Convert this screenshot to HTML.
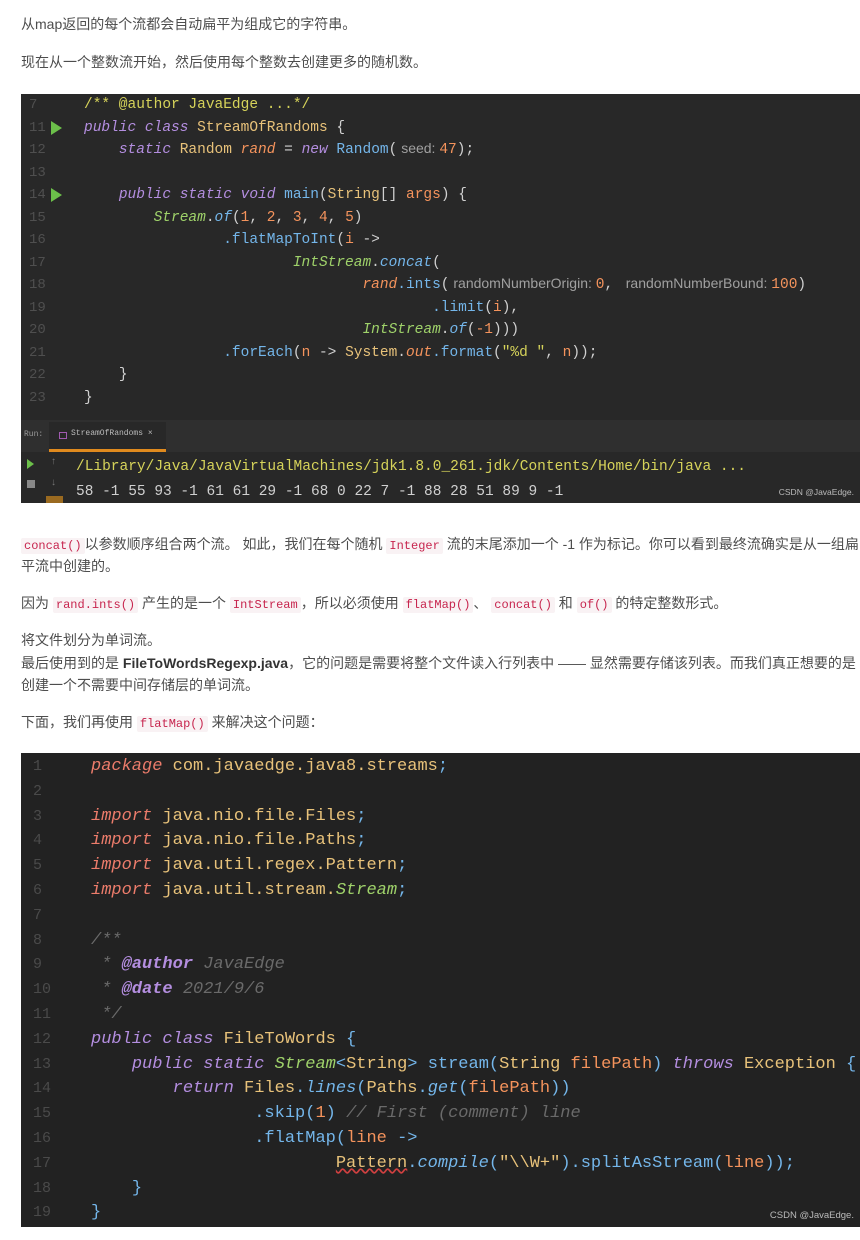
<!DOCTYPE html>
<html><head><meta charset="utf-8"><style>
*{margin:0;padding:0;box-sizing:border-box}
body{width:860px;height:1240px;background:#fff;font-family:"Liberation Sans","Noto Sans CJK SC",sans-serif;color:#4d4d4d;font-size:14px;position:relative;overflow:hidden}
.p{position:absolute;left:21px;line-height:24px;white-space:nowrap}
code{font-family:"Liberation Mono",monospace;font-size:12px;color:#c7254e;background:#f9f2f4;padding:1px 3px;border-radius:2px}
.img{position:absolute;left:21px;width:839px;background:#282828;overflow:hidden}
.l{position:absolute;white-space:pre;font-family:"Liberation Mono",monospace}
.n{position:absolute;color:#555;font-family:"Liberation Mono",monospace;white-space:pre}
.k{color:#b48ee0;font-style:italic}.y{color:#e8c27a}.b{color:#74b6ea}.o{color:#f4935c}.g{color:#9fd26a;font-style:italic}.c{color:#d6d35a}.w{color:#d0d0d0}.h{color:#a0a0a0;font-size:14px;font-family:"Liberation Sans",sans-serif;line-height:0}.r{color:#ec7c6b;font-style:italic}.gr{color:#6a6a6a;font-style:italic}.pu{color:#b48ee0;font-weight:bold;font-style:italic}
.it{font-style:italic}
</style></head><body>
<div class="p" style="top:12px">从map返回的每个流都会自动扁平为组成它的字符串。</div>
<div class="p" style="top:50px">现在从一个整数流开始，然后使用每个整数去创建更多的随机数。</div>

<div class="img" style="top:94px;height:409px">
<div class="n" style="left:8px;top:0;font-size:14px;line-height:22.5px;color:#4f4f4f">7
11
12
13
14
15
16
17
18
19
20
21
22
23</div>
<div style="position:absolute;left:30px;top:27px;width:0;height:0;border-left:11px solid #6cc04a;border-top:7px solid transparent;border-bottom:7px solid transparent"></div>
<div style="position:absolute;left:30px;top:94px;width:0;height:0;border-left:11px solid #6cc04a;border-top:7px solid transparent;border-bottom:7px solid transparent"></div>
<div class="l" style="left:63px;top:0;font-size:14.5px;line-height:22.5px"><span class="c">/** @author JavaEdge ...*/</span>
<span class="k">public class</span> <span class="y">StreamOfRandoms</span> <span class="w">{</span>
    <span class="k">static</span> <span class="y">Random</span> <span class="o it">rand</span> <span class="w">=</span> <span class="k">new</span> <span class="b">Random</span><span class="w">(</span><span class="h"> seed: </span><span class="o">47</span><span class="w">);</span>

    <span class="k">public static void</span> <span class="b">main</span><span class="w">(</span><span class="y">String</span><span class="w">[]</span> <span class="o">args</span><span class="w">) {</span>
        <span class="g">Stream</span><span class="w">.</span><span class="b it">of</span><span class="w">(</span><span class="o">1</span><span class="w">, </span><span class="o">2</span><span class="w">, </span><span class="o">3</span><span class="w">, </span><span class="o">4</span><span class="w">, </span><span class="o">5</span><span class="w">)</span>
                <span class="b">.flatMapToInt</span><span class="w">(</span><span class="o">i</span> <span class="w">-&gt;</span>
                        <span class="g">IntStream</span><span class="w">.</span><span class="b it">concat</span><span class="w">(</span>
                                <span class="o it">rand</span><span class="b">.ints</span><span class="w">(</span><span class="h"> randomNumberOrigin: </span><span class="o">0</span><span class="w">, </span><span class="h"> randomNumberBound: </span><span class="o">100</span><span class="w">)</span>
                                        <span class="b">.limit</span><span class="w">(</span><span class="o">i</span><span class="w">),</span>
                                <span class="g">IntStream</span><span class="w">.</span><span class="b it">of</span><span class="w">(</span><span class="o">-1</span><span class="w">)))</span>
                <span class="b">.forEach</span><span class="w">(</span><span class="o">n</span> <span class="w">-&gt;</span> <span class="y">System</span><span class="w">.</span><span class="o it">out</span><span class="b">.format</span><span class="w">(</span><span class="c">"%d "</span><span class="w">, </span><span class="o">n</span><span class="w">));</span>
    <span class="w">}</span>
<span class="w">}</span></div>
<div style="position:absolute;left:0;top:326px;width:839px;height:32px;background:#2f2f2f"></div>
<div style="position:absolute;left:3px;top:336px;font-size:8px;color:#999;font-family:'Liberation Mono',monospace">Run:</div>
<div style="position:absolute;left:28px;top:328px;width:117px;height:30px;background:#282828;border-bottom:3px solid #e08a1e"></div>
<div style="position:absolute;left:38px;top:338px;width:8px;height:7px;border:1px solid #a05ab0"></div>
<div style="position:absolute;left:50px;top:335px;font-size:8px;color:#bbb;font-family:'Liberation Mono',monospace">StreamOfRandoms ×</div>
<div style="position:absolute;left:6px;top:365px;width:0;height:0;border-left:7px solid #6cc04a;border-top:5px solid transparent;border-bottom:5px solid transparent"></div>
<div style="position:absolute;left:6px;top:386px;width:8px;height:8px;background:#888"></div>
<div style="position:absolute;left:30px;top:362px;font-size:10px;color:#777">↑</div>
<div style="position:absolute;left:30px;top:383px;font-size:10px;color:#777">↓</div>
<div style="position:absolute;left:25px;top:402px;width:17px;height:8px;background:#9a6a20"></div>
<div class="l" style="left:55px;top:361px;font-size:14.5px;line-height:25px"><span class="c">/Library/Java/JavaVirtualMachines/jdk1.8.0_261.jdk/Contents/Home/bin/java ...</span>
<span class="w">58 -1 55 93 -1 61 61 29 -1 68 0 22 7 -1 88 28 51 89 9 -1</span></div>
<div style="position:absolute;right:6px;top:393px;font-size:8.5px;color:#bbb">CSDN @JavaEdge.</div>
</div>

<div class="p" style="top:532px"><code>concat()</code>以参数顺序组合两个流。 如此，我们在每个随机 <code>Integer</code> 流的末尾添加一个 -1 作为标记。你可以看到最终流确实是从一组扁</div>
<div class="p" style="top:554px">平流中创建的。</div>
<div class="p" style="top:591px">因为 <code>rand.ints()</code> 产生的是一个 <code>IntStream</code>，所以必须使用 <code>flatMap()</code>、 <code>concat()</code> 和 <code>of()</code> 的特定整数形式。</div>
<div class="p" style="top:628px">将文件划分为单词流。</div>
<div class="p" style="top:651px">最后使用到的是 <b style="color:#333">FileToWordsRegexp.java</b>，它的问题是需要将整个文件读入行列表中 —— 显然需要存储该列表。而我们真正想要的是</div>
<div class="p" style="top:673px">创建一个不需要中间存储层的单词流。</div>
<div class="p" style="top:710px">下面，我们再使用 <code>flatMap()</code> 来解决这个问题：</div>

<div class="img" style="top:753px;height:474px;background:#222">
<div class="n" style="left:12px;top:2px;font-size:15px;line-height:24.8px;color:#4a4a4a">1
2
3
4
5
6
7
8
9
10
11
12
13
14
15
16
17
18
19</div>
<div class="l" style="left:70px;top:2px;font-size:17px;line-height:24.8px"><span class="r">package</span> <span class="y">com.javaedge.java8.streams</span><span class="b">;</span>

<span class="r">import</span> <span class="y">java.nio.file.Files</span><span class="b">;</span>
<span class="r">import</span> <span class="y">java.nio.file.Paths</span><span class="b">;</span>
<span class="r">import</span> <span class="y">java.util.regex.Pattern</span><span class="b">;</span>
<span class="r">import</span> <span class="y">java.util.stream.</span><span class="g">Stream</span><span class="b">;</span>

<span class="gr">/**</span>
<span class="gr"> * </span><span class="pu">@author</span> <span class="gr">JavaEdge</span>
<span class="gr"> * </span><span class="pu">@date</span> <span class="gr">2021/9/6</span>
<span class="gr"> */</span>
<span class="k">public class</span> <span class="y">FileToWords</span> <span class="b">{</span>
    <span class="k">public static</span> <span class="g">Stream</span><span class="b">&lt;</span><span class="y">String</span><span class="b">&gt;</span> <span class="b">stream(</span><span class="y">String</span> <span class="o">filePath</span><span class="b">)</span> <span class="k">throws</span> <span class="y">Exception</span> <span class="b">{</span>
        <span class="k">return</span> <span class="y">Files</span><span class="b">.</span><span class="b it">lines</span><span class="b">(</span><span class="y">Paths</span><span class="b">.</span><span class="b it">get</span><span class="b">(</span><span class="o">filePath</span><span class="b">))</span>
                <span class="b">.skip(</span><span class="o">1</span><span class="b">)</span> <span class="gr">// First (comment) line</span>
                <span class="b">.flatMap(</span><span class="o">line</span> <span class="b">-&gt;</span>
                        <span class="y" style="text-decoration:underline wavy #d04040">Pattern</span><span class="b">.</span><span class="b it">compile</span><span class="b">(</span><span class="y">"\\W+"</span><span class="b">).splitAsStream(</span><span class="o">line</span><span class="b">));</span>
    <span class="b">}</span>
<span class="b">}</span></div>
<div style="position:absolute;right:6px;top:457px;font-size:9.5px;color:#bbb">CSDN @JavaEdge.</div>
</div>
</body></html>
